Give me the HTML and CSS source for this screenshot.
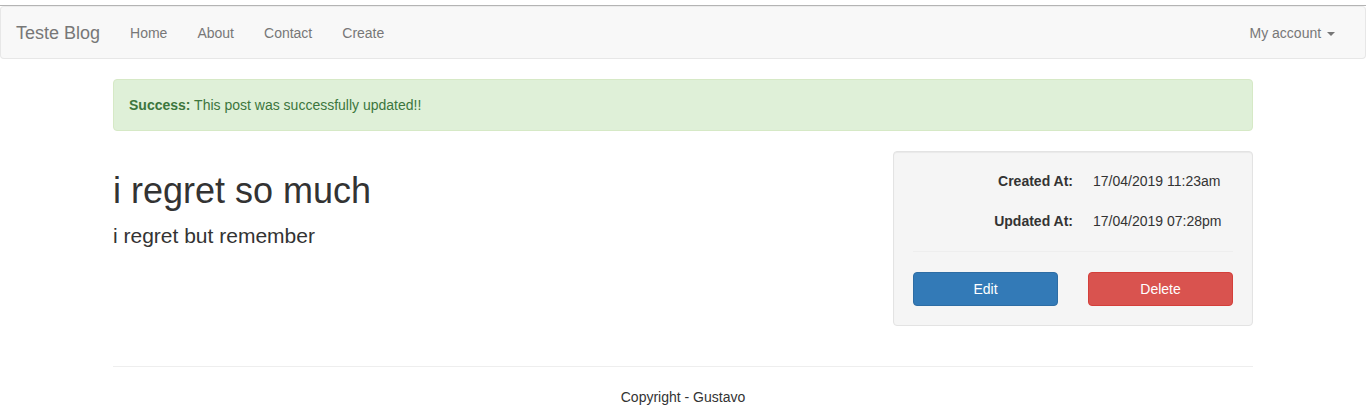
FILE: index.html
```html
<!DOCTYPE html>
<html lang="en">
<head>
<meta charset="utf-8">
<title>Teste Blog</title>
<link rel="stylesheet" href="styles.css">
</head>
<body>
<div class="topline"></div>
<nav class="navbar">
  <div class="nav-left">
    <a class="brand" href="#">Teste Blog</a>
    <ul class="nav">
      <li><a href="#">Home</a></li>
      <li><a href="#">About</a></li>
      <li><a href="#">Contact</a></li>
      <li><a href="#">Create</a></li>
    </ul>
  </div>
  <ul class="nav nav-right">
    <li><a href="#">My account <span class="caret"></span></a></li>
  </ul>
</nav>
<div class="container">
  <div class="alert"><strong>Success:</strong> This post was successfully updated!!</div>
  <div class="row">
    <div class="col-main">
      <h1>i regret so much</h1>
      <p class="lead">i regret but remember</p>
    </div>
    <div class="col-side">
      <div class="well">
        <dl class="dl-h"><dt>Created At:</dt><dd>17/04/2019 11:23am</dd></dl>
        <dl class="dl-h"><dt>Updated At:</dt><dd>17/04/2019 07:28pm</dd></dl>
        <hr class="sep">
        <div class="btn-row">
          <a class="btn btn-primary" href="#">Edit</a>
          <a class="btn btn-danger" href="#">Delete</a>
        </div>
      </div>
    </div>
  </div>
  <hr class="foot-hr">
  <p class="copy">Copyright - Gustavo</p>
</div>
</body>
</html>
```
FILE: styles.css
```css
* { box-sizing: border-box; }
html, body { margin: 0; padding: 0; }
body {
  font-family: "Liberation Sans", Arial, Helvetica, sans-serif;
  font-size: 14px;
  line-height: 20px;
  color: #333;
  background: #fff;
}
a { text-decoration: none; }
.topline {
  height: 6px;
  border-bottom: 1px solid #b4b4b4;
}
.navbar {
  display: flex;
  justify-content: space-between;
  align-items: center;
  min-height: 53px;
  background: #f8f8f8;
  border: 1px solid #e7e7e7;
  border-top-color: #ececec;
  border-radius: 4px;
  margin-bottom: 20px;
}
.nav-left { display: flex; }
.brand {
  display: block;
  height: 50px;
  padding: 15px;
  font-size: 18px;
  line-height: 20px;
  color: #777;
}
.nav {
  display: flex;
  list-style: none;
  margin: 0;
  padding: 0;
}
.nav a {
  display: block;
  padding: 15px;
  line-height: 20px;
  color: #777;
}
.nav-right { margin-right: 15px; }
.caret {
  display: inline-block;
  width: 0;
  height: 0;
  margin-left: 2px;
  vertical-align: middle;
  border-top: 4px solid #777;
  border-left: 4px solid transparent;
  border-right: 4px solid transparent;
}
.container {
  width: 1170px;
  margin: 0 auto;
  padding: 0 15px;
}
.alert {
  padding: 15px;
  margin-bottom: 20px;
  border: 1px solid #d6e9c6;
  border-radius: 4px;
  background: #dff0d8;
  color: #3c763d;
}
.row {
  display: flex;
  margin: 0 -15px;
}
.col-main { width: 780px; padding: 0 15px; }
.col-side { width: 390px; padding: 0 15px; }
h1 {
  font-size: 36px;
  font-weight: 500;
  line-height: 1.1;
  margin: 20px 0 10px;
}
.lead {
  font-size: 21px;
  font-weight: 300;
  line-height: 1.4;
  margin: 0 0 20px;
}
.well {
  min-height: 20px;
  padding: 19px;
  margin-bottom: 20px;
  background: #f5f5f5;
  border: 1px solid #e3e3e3;
  border-radius: 4px;
  box-shadow: inset 0 1px 1px rgba(0,0,0,.05);
}
.dl-h {
  display: flex;
  margin: 0 0 20px;
}
.dl-h dt {
  width: 160px;
  text-align: right;
  font-weight: 700;
}
.dl-h dd { margin: 0 0 0 20px; }
.sep {
  margin: 0 0 20px;
  border: 0;
  border-top: 1px solid #eee;
}
.btn-row {
  display: grid;
  grid-template-columns: 1fr 1fr;
  column-gap: 30px;
}
.btn {
  display: block;
  padding: 6px 12px;
  font-size: 14px;
  line-height: 20px;
  text-align: center;
  color: #fff;
  border: 1px solid transparent;
  border-radius: 4px;
}
.btn-primary { background: #337ab7; border-color: #2e6da4; }
.btn-danger { background: #d9534f; border-color: #d43f3a; }
.foot-hr {
  margin: 20px 0 20px;
  border: 0;
  border-top: 1px solid #eee;
}
.copy {
  text-align: center;
  margin: 0 0 10px;
}
```
